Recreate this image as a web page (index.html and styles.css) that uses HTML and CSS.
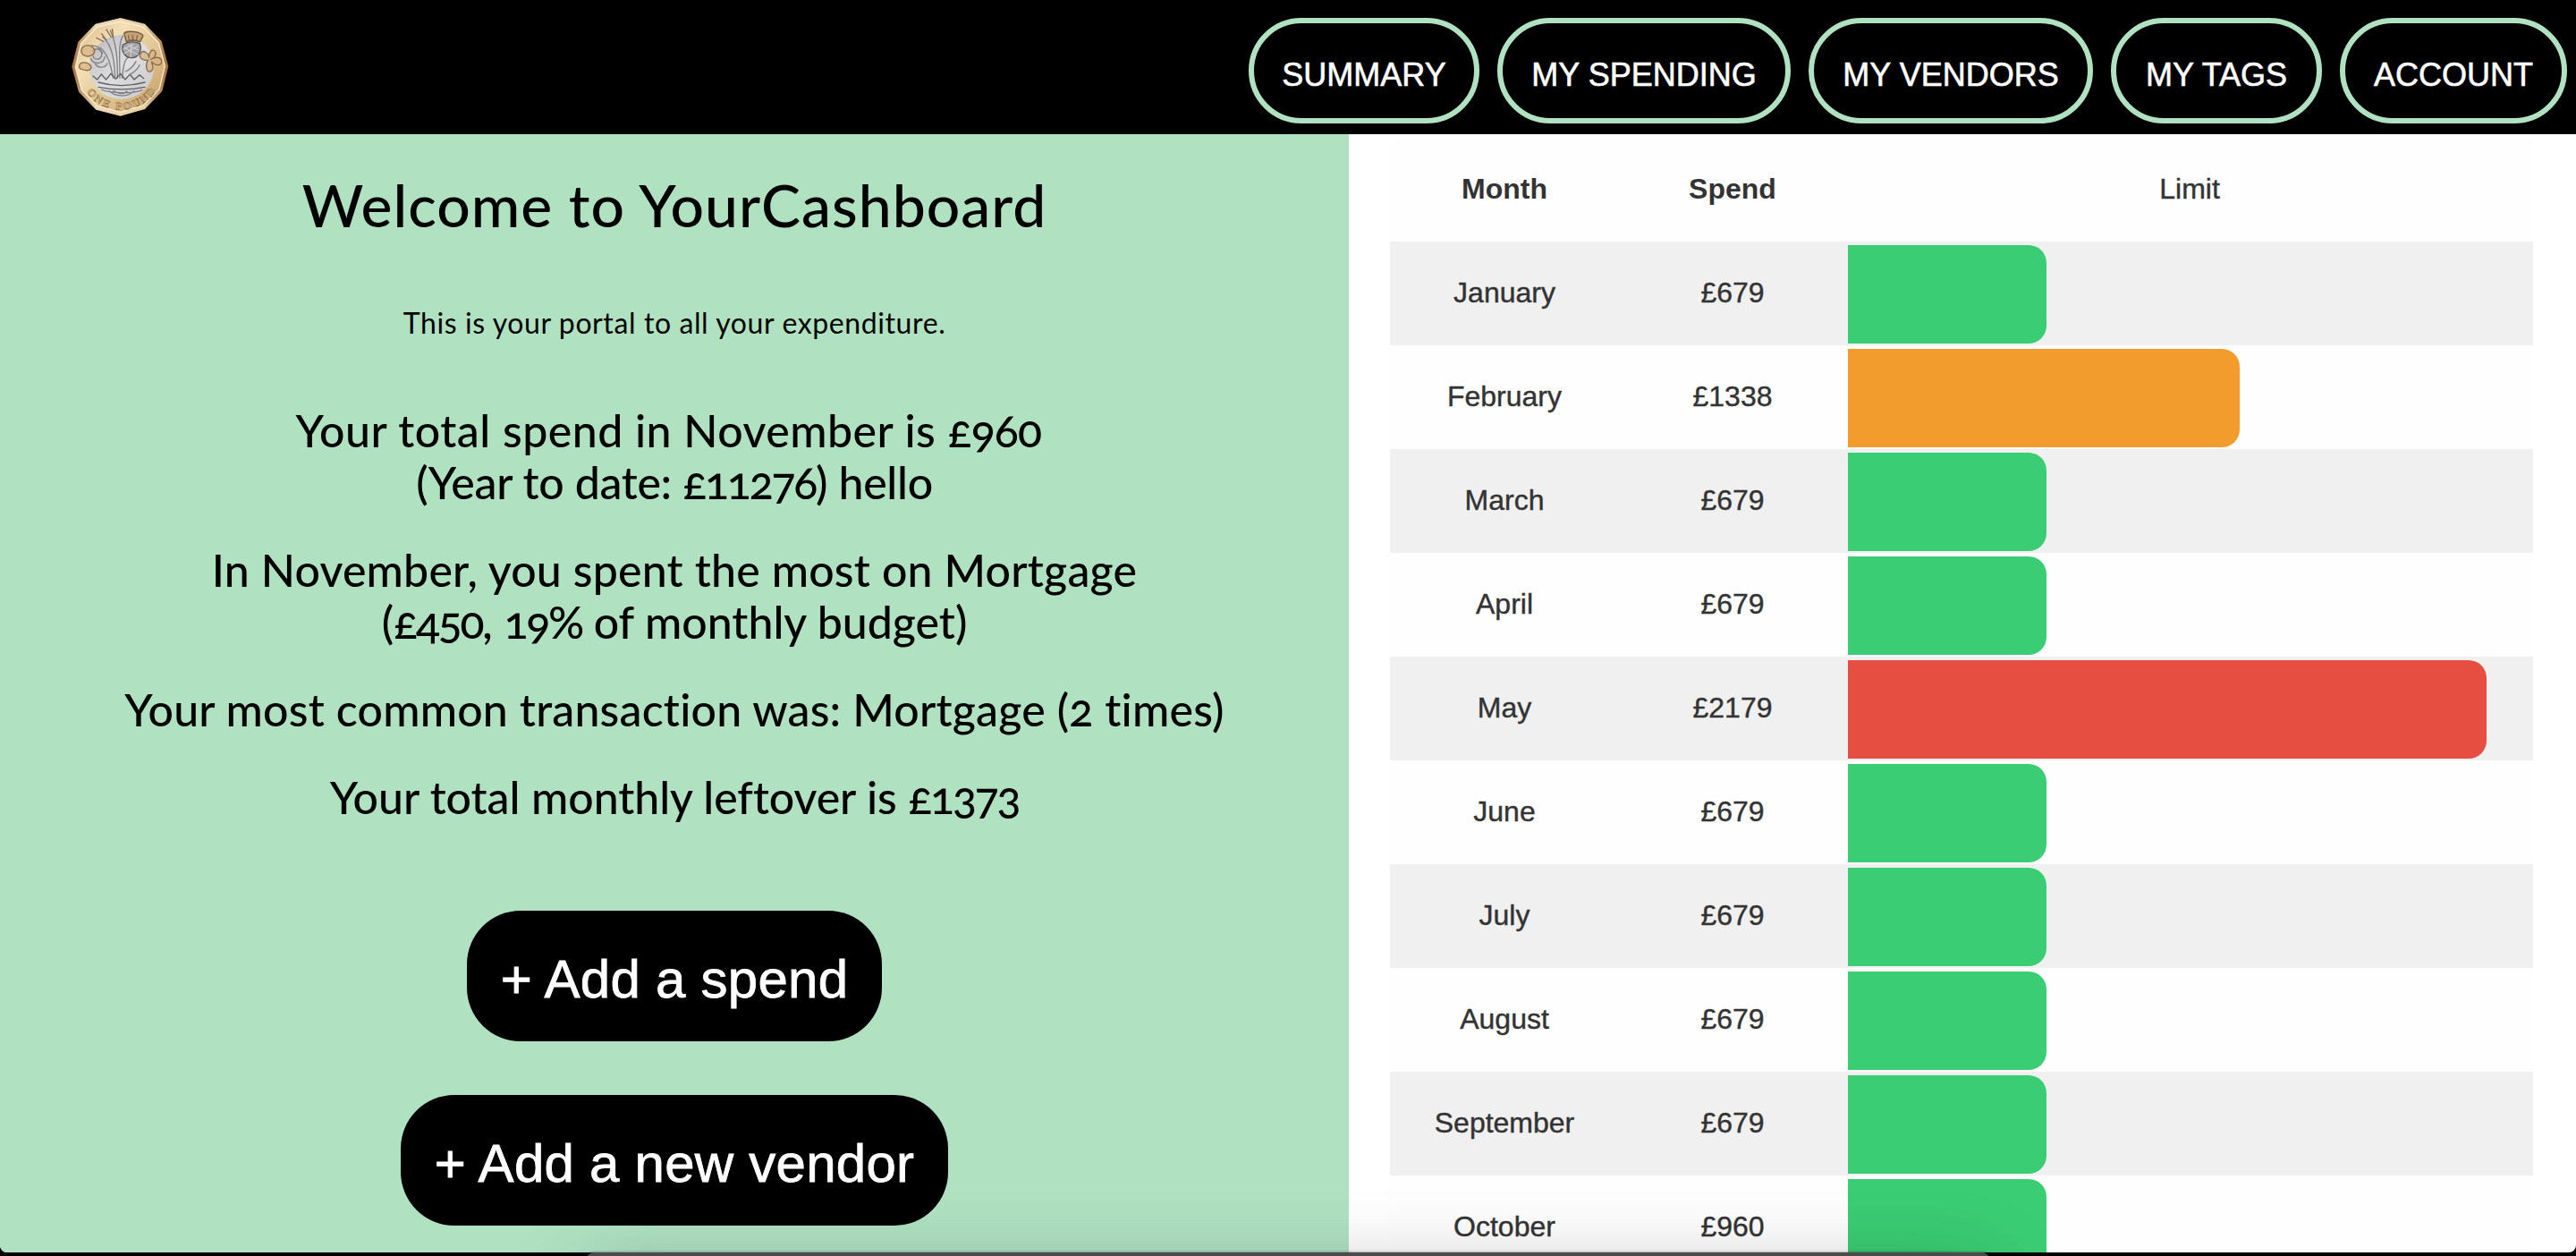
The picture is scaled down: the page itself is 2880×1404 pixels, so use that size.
FILE: index.html
```
<!DOCTYPE html>
<html lang="en">
<head>
<meta charset="utf-8">
<title>YourCashboard</title>
<link rel="stylesheet" href="styles.css">
</head>
<body>
<header class="topbar">
  <a class="logo" href="#">
    <svg width="150" height="150" viewBox="0 0 450 450">
      <defs>
        <linearGradient id="gold" x1="0" y1="0" x2="1" y2="1">
          <stop offset="0" stop-color="#d9b684"/><stop offset=".3" stop-color="#f3dfb8"/>
          <stop offset=".6" stop-color="#e0c492"/><stop offset="1" stop-color="#c49a60"/>
        </linearGradient>
        <linearGradient id="rim" x1="0" y1="0" x2="1" y2="0">
          <stop offset="0" stop-color="#a9713c"/><stop offset=".25" stop-color="#ecd9b4"/>
          <stop offset=".75" stop-color="#e6cfa4"/><stop offset="1" stop-color="#a06a35"/>
        </linearGradient>
        <linearGradient id="silver" x1="0" y1="0" x2="1" y2="1">
          <stop offset="0" stop-color="#b8b8ba"/><stop offset=".5" stop-color="#dededf"/><stop offset="1" stop-color="#c8c8ca"/>
        </linearGradient>
        <path id="legend" d="M92 272A140 140 0 0 0 361 261"/>
      </defs>
      <polygon fill="url(#rim)" points="224,60 306,80 362,138 385,222 364,306 306,366 224,389 142,368 84,308 61,224 82,140 140,80"/>
      <polygon fill="url(#gold)" stroke="#f8ecd2" stroke-width="4" points="224,72 300,90 352,143 373,222 354,300 300,354 224,376 148,356 94,302 73,224 92,146 147,90"/>
      <circle cx="228" cy="225" r="108" fill="url(#silver)"/>
      <g fill="none" stroke="#808184" stroke-width="4" stroke-linecap="round">
        <path d="M206 262C204 200 196 150 164 124M214 262C214 200 212 150 190 102M222 262C222 190 216 150 232 120M200 262C190 210 180 180 156 160M230 262C234 210 240 200 252 190"/>
        <path d="M132 255l14 12 14-18 16 18 16-20 16 18 16-18 16 20 16-18 14 18 18-16 14 12" stroke="#5f6064"/>
        <path d="M150 276C200 290 254 290 306 276M150 292C200 302 256 302 306 292" stroke="#5f6064"/>
        <path d="M160 300C180 312 270 316 296 302M186 304c16 20 64 24 84 0M200 304c14 12 34 14 46 2M240 240c16-6 28-18 36-34M256 250c12-8 24-14 32-32"/>
        <path d="M130 170c18-14 36 2 30 18s-26 12-28-2M124 196c14 26 44 16 48-6M140 216c12 14 34 12 40-4M128 152l22 6 14 20"/>
      </g>
      <path d="M232 150c-6 24 8 44 30 44s36-24 27-48c-16-8-40-8-57 4z" fill="#a3a3a6" stroke="#55565a" stroke-width="4"/>
      <path d="M236 160l48 24M248 150l36 18M284 154l-48 26M268 148l-36 18M260 148l-2 44" stroke="#d8d8da" stroke-width="3"/>
      <path d="M236 112c8-10 54-8 64 8l-10 20c-16-6-34-6-46 0z" fill="#c4a27a" stroke="#765535" stroke-width="4"/>
      <path d="M250 118l4 20M264 116l2 20M280 118l-2 20" stroke="#765535" stroke-width="3"/>
      <path d="M142 126l26 14M160 112l18 24M176 98l18 28M196 96l4 30" stroke="#8a6a45" stroke-width="4"/>
      <g fill="#d4b282" fill-opacity=".7" stroke="#8f6a42" stroke-width="4">
        <path d="M96 160c14-14 34-8 40 6s-14 26-28 22-20-16-12-28zM86 220c4-14 24-12 34-4s6 22-10 20-26-4-24-16z"/>
        <path d="M316 202c-22 2-32-12-24-24s26-2 28 16c0-22 12-32 20-22s-4 24-16 28c20-12 38-8 38 6s-20 18-34 0c6 16 8 30-4 34s-18-20-8-38z"/>
      </g>
      <text class="coin-legend"><textPath href="#legend" startOffset="50%" text-anchor="middle">ONE POUND</textPath></text>
    </svg>
  </a>
  <nav class="menu">
    <a class="menu-item summary" href="#">SUMMARY</a>
    <a class="menu-item spending" href="#">MY SPENDING</a>
    <a class="menu-item vendors" href="#">MY VENDORS</a>
    <a class="menu-item tags" href="#">MY TAGS</a>
    <a class="menu-item account" href="#">ACCOUNT</a>
  </nav>
</header>
<main class="page">
  <section class="welcome">
    <h1>Welcome to YourCashboard</h1>
    <p class="intro">This is your portal to all your expenditure.</p>
    <div class="facts">
      <p>Your total spend in November is <span class="num">£960</span>&nbsp;<br><span class="ytd">(Year to date: <span class="num">£11276</span>) hello</span></p>
      <p>In November, you spent the most on Mortgage<br><span class="share">(<span class="num">£450</span>, <span class="num">19%</span> of monthly budget)</span></p>
      <p>Your most common transaction was: Mortgage (2 times)</p>
      <p class="leftover">Your total monthly leftover is <span class="num">£1373</span></p>
    </div>
    <div class="actions">
      <a class="action add-spend" href="#">+ Add a spend</a>
      <a class="action add-vendor" href="#">+ Add a new vendor</a>
    </div>
  </section>
  <section class="report">
    <table class="months">
      <thead><tr><th class="month">Month</th><th class="spend">Spend</th><th class="limit">Limit</th></tr></thead>
      <tbody>
        <tr><td>January</td><td>£679</td><td class="chart"><div class="bar" style="width:222px"></div></td></tr>
        <tr><td>February</td><td>£1338</td><td class="chart"><div class="bar warn" style="width:438px"></div></td></tr>
        <tr><td>March</td><td>£679</td><td class="chart"><div class="bar" style="width:222px"></div></td></tr>
        <tr><td>April</td><td>£679</td><td class="chart"><div class="bar" style="width:222px"></div></td></tr>
        <tr><td>May</td><td>£2179</td><td class="chart"><div class="bar over" style="width:714px"></div></td></tr>
        <tr><td>June</td><td>£679</td><td class="chart"><div class="bar" style="width:222px"></div></td></tr>
        <tr><td>July</td><td>£679</td><td class="chart"><div class="bar" style="width:222px"></div></td></tr>
        <tr><td>August</td><td>£679</td><td class="chart"><div class="bar" style="width:222px"></div></td></tr>
        <tr><td>September</td><td>£679</td><td class="chart"><div class="bar" style="width:222px"></div></td></tr>
        <tr><td>October</td><td>£960</td><td class="chart"><div class="bar" style="width:222px"></div></td></tr>
      </tbody>
    </table>
  </section>
</main>
<div class="dock"></div>
</body>
</html>
```
FILE: styles.css
```
* { box-sizing: border-box; }

body {
  position: relative;
  height: 1404px;
  margin: 0;
  overflow: hidden;
  background: #000;
  font-family: "Liberation Sans", Arial, sans-serif;
}

a { color: inherit; text-decoration: none; }

/* Top bar */
.topbar {
  display: flex;
  justify-content: space-between;
  height: 150px;
  padding: 0 10px 0 60px;
  background: #000;
  color: #fff;
}
.logo svg { display: block; }
.coin-legend {
  fill: #dcc193;
  stroke: #8a6538;
  stroke-width: 1.5px;
  font: 700 36px "Liberation Serif", serif;
  letter-spacing: 7px;
}
.menu { display: flex; gap: 20px; padding-top: 20px; }
.menu-item {
  height: 118px;
  padding-top: 38px;
  border: 6px solid #b0e2c2;
  border-radius: 60px;
  font-size: 36px;
  line-height: 40px;
  text-align: center;
  white-space: nowrap;
  -webkit-text-stroke: .6px #fff;
}
.summary { width: 258px; }
.spending { width: 328px; }
.vendors { width: 318px; }
.tags { width: 236px; }
.account { width: 254px; }

/* Two-column page */
.page {
  display: flex;
  height: 1250px;
  overflow: hidden;
  border-radius: 0 0 8px 8px;
  background: #fff;
}
.welcome {
  width: 1508px;
  padding-top: 39px;
  background: #b0e2c2;
  color: #000;
  font-family: Lato, sans-serif;
  font-variant-numeric: oldstyle-nums;
  text-align: center;
  white-space: nowrap;
}
h1 {
  margin: 0 0 72px;
  font-size: 66px;
  font-weight: 500;
  line-height: 80px;
  letter-spacing: 1px;
}
.intro {
  margin: 0 0 71px;
  font-size: 32px;
  line-height: 40px;
  letter-spacing: .6px;
}
.facts {
  display: flex;
  flex-direction: column;
  gap: 40px;
  font-size: 50px;
  font-weight: 500;
  line-height: 58px;
  letter-spacing: .2px;
}
.facts p { margin: 0; }
.facts p:first-child { letter-spacing: .5px; }
.facts .num { letter-spacing: -2.2px; }
.facts p:first-child > .num { letter-spacing: -.8px; }
.facts .ytd { letter-spacing: -.3px; }
.facts .share { letter-spacing: 0; }
.facts .leftover { letter-spacing: -.05px; }

.actions {
  display: flex;
  flex-direction: column;
  align-items: center;
  gap: 60px;
  margin-top: 98px;
  font-family: "Liberation Sans", Arial, sans-serif;
}
.action {
  height: 146px;
  padding-top: 42px;
  border-radius: 60px;
  background: #000;
  color: #fff;
  font-size: 60px;
  line-height: 70px;
  letter-spacing: .25px;
  -webkit-text-stroke: .8px #fff;
}
.add-spend { width: 464px; }
.add-vendor { width: 612px; }

/* Monthly table */
.report { flex: 1; padding: 4px 48px 0 46px; }
.months {
  width: 1278px;
  border-collapse: collapse;
  table-layout: fixed;
  background: #fefefe;
  color: #333;
  font-size: 32px;
  text-align: center;
}
.months tr { height: 116px; }
.months th, .months td { padding: 0 0 2px; }
.months tbody tr:nth-child(odd) { background: #f0f0f0; }
.month { width: 256px; }
.spend { width: 254px; }
.limit { font-weight: 400; }
.months td, .limit { -webkit-text-stroke: .4px #333; }
.months .chart { padding: 4px 2px 2px; }
.bar {
  height: 110px;
  border-radius: 0 20px 20px 0;
  background: #3bcd74;
}
.bar.warn { background: #f19c2c; }
.bar.over { background: #e64e42; }

/* Panel peeking in over the bottom edge */
.dock {
  position: absolute;
  left: 656px;
  top: 1400px;
  width: 1568px;
  height: 60px;
  border-radius: 8px 8px 0 0;
  background: #4b4b4b;
  box-shadow: 0 0 3px rgba(0, 0, 0, .5), 0 24px 90px rgba(0, 0, 0, .28);
}
```
